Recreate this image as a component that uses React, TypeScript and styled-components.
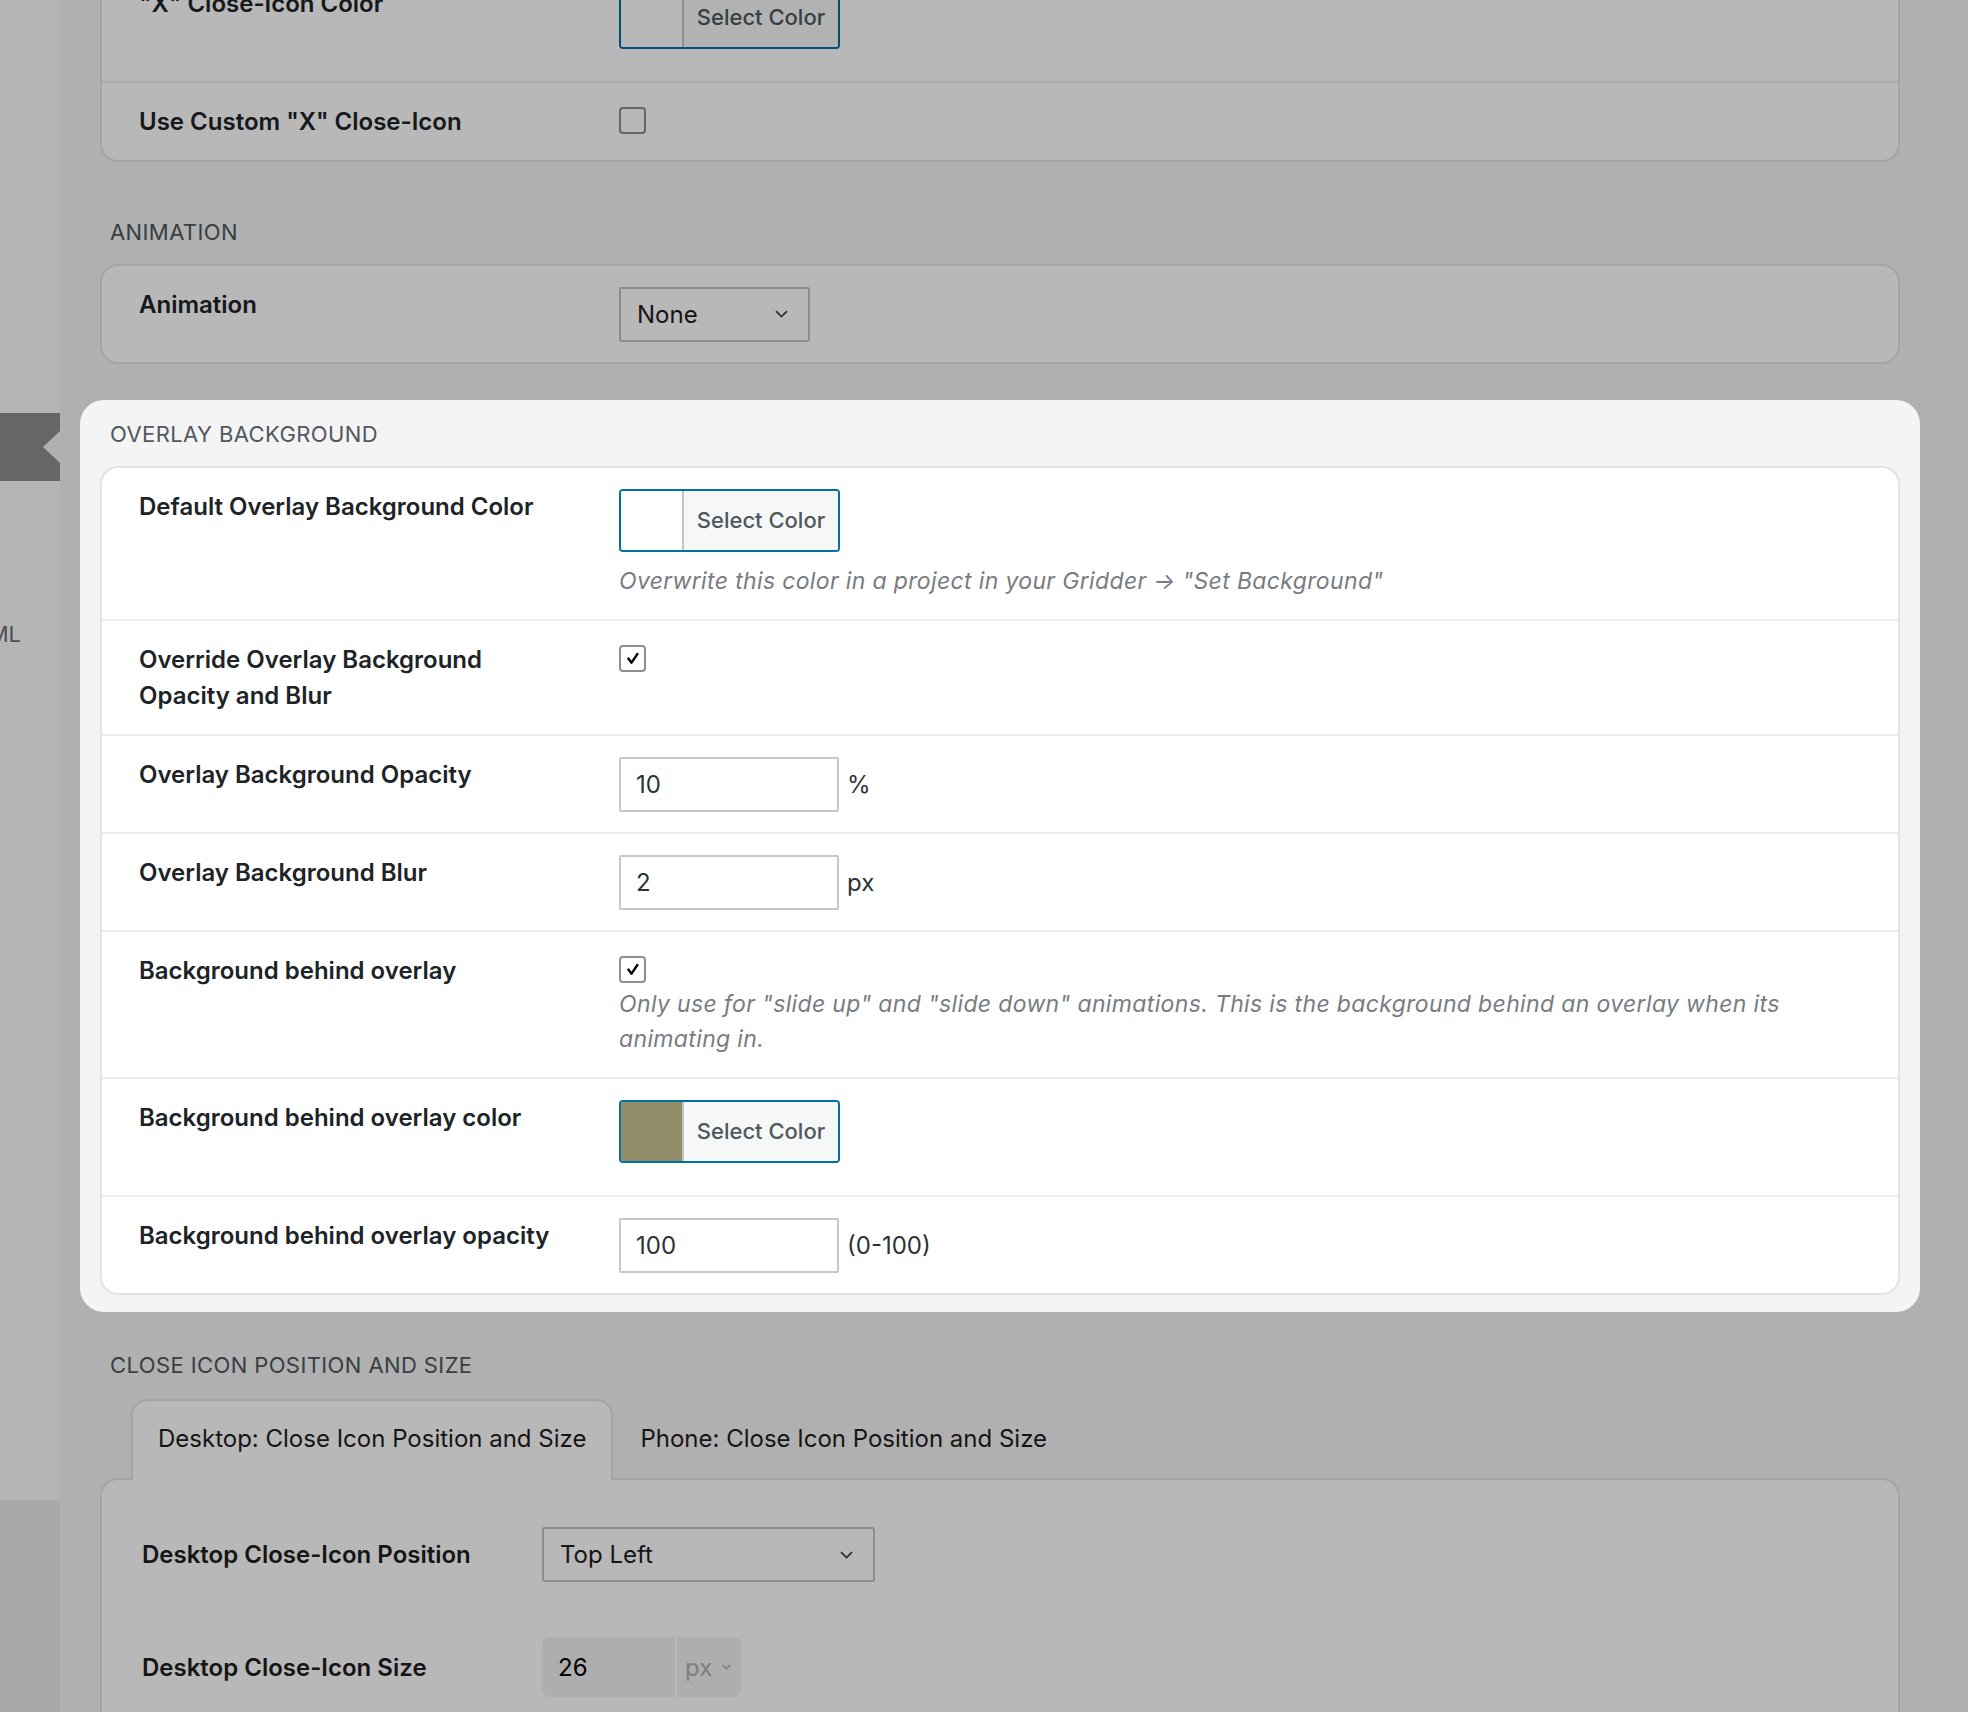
import React from "react";
import styled, { createGlobalStyle } from "styled-components";

const GlobalStyle = createGlobalStyle`
  html, body {
    margin: 0;
    padding: 0;
  }
  body {
    background: #f4f4f4;
    font-family: Inter, "Noto Sans", "Liberation Sans", sans-serif;
    color: #1d2327;
  }
  * {
    box-sizing: border-box;
  }
`;

const CheckMark = () => (
  <svg width="27" height="27" viewBox="0 0 27 27">
    <path
      d="M8.6 13.6 L12.4 18.4 L19.2 8.2"
      fill="none"
      stroke="#000"
      strokeWidth="2.8"
      strokeLinecap="round"
      strokeLinejoin="round"
    />
  </svg>
);

const Chevron = ({ small }: { small?: boolean }) => (
  <svg
    width={small ? 9 : 13}
    height={small ? 6 : 8}
    viewBox="0 0 13 8"
    style={{ flexShrink: 0 }}
  >
    <path
      d="M1 1.2 L6.5 6.6 L12 1.2"
      fill="none"
      stroke="currentColor"
      strokeWidth={small ? 2.2 : 1.7}
    />
  </svg>
);

const ColorPicker = ({ color }: { color: string }) => (
  <ColorButton>
    <Swatch $color={color} />
    <ColorText>Select Color</ColorText>
  </ColorButton>
);

const Checkbox = ({ checked }: { checked?: boolean }) => (
  <CheckLine>
    <CheckBox>{checked && <CheckMark />}</CheckBox>
  </CheckLine>
);

const App = () => {
  return (
    <>
      <GlobalStyle />
      <Page>
        <AdminMenu>
          <MenuTop />
          <MenuCurrent />
          <MenuBody>
            <MenuLabel>HTML</MenuLabel>
          </MenuBody>
          <MenuFoot />
        </AdminMenu>

        <Main>
          <Card $first>
            <Row>
              <Label>"X" Close-Icon Color</Label>
              <Field>
                <ColorPicker color="#ffffff" />
              </Field>
            </Row>
            <Row>
              <Label>Use Custom "X" Close-Icon</Label>
              <Field>
                <Checkbox />
              </Field>
            </Row>
          </Card>

          <Section>
            <SectionTitle>Animation</SectionTitle>
            <Card>
              <Row>
                <Label>Animation</Label>
                <Field>
                  <Select $width={191}>
                    None
                    <Chevron />
                  </Select>
                </Field>
              </Row>
            </Card>
          </Section>

          <Spotlight>
            <SectionTitle>Overlay Background</SectionTitle>
            <Card>
              <Row>
                <Label>Default Overlay Background Color</Label>
                <Field>
                  <ColorPicker color="#ffffff" />
                  <Hint>
                    Overwrite this color in a project in your Gridder → "Set
                    Background"
                  </Hint>
                </Field>
              </Row>
              <Row>
                <Label>Override Overlay Background Opacity and Blur</Label>
                <Field>
                  <Checkbox checked />
                </Field>
              </Row>
              <Row>
                <Label>Overlay Background Opacity</Label>
                <Field>
                  <InputLine>
                    <TextInput>10</TextInput>
                    <Unit>%</Unit>
                  </InputLine>
                </Field>
              </Row>
              <Row>
                <Label>Overlay Background Blur</Label>
                <Field>
                  <InputLine>
                    <TextInput>2</TextInput>
                    <Unit>px</Unit>
                  </InputLine>
                </Field>
              </Row>
              <Row>
                <Label>Background behind overlay</Label>
                <Field>
                  <Checkbox checked />
                  <Hint>
                    Only use for "slide up" and "slide down" animations. This is
                    the background behind an overlay when its animating in.
                  </Hint>
                </Field>
              </Row>
              <Row>
                <Label>Background behind overlay color</Label>
                <Field>
                  <ColorPicker color="#928d69" />
                </Field>
              </Row>
              <Row>
                <Label>Background behind overlay opacity</Label>
                <Field>
                  <InputLine>
                    <TextInput>100</TextInput>
                    <Unit>(0-100)</Unit>
                  </InputLine>
                </Field>
              </Row>
            </Card>
          </Spotlight>

          <Section>
            <SectionTitle $gap={20}>Close Icon Position and Size</SectionTitle>
            <TabList>
              <Tab $active>Desktop: Close Icon Position and Size</Tab>
              <Tab>Phone: Close Icon Position and Size</Tab>
            </TabList>
            <TabPanel>
              <PanelRow>
                <PanelLabel>Desktop Close-Icon Position</PanelLabel>
                <Select $width={333}>
                  Top Left
                  <Chevron />
                </Select>
              </PanelRow>
              <PanelRow>
                <PanelLabel>Desktop Close-Icon Size</PanelLabel>
                <UnitInput>
                  <UnitValue>26</UnitValue>
                  <UnitPicker>
                    px
                    <Chevron small />
                  </UnitPicker>
                </UnitInput>
              </PanelRow>
            </TabPanel>
          </Section>
        </Main>

        <Dimmer />
      </Page>
    </>
  );
};

export default App;

const Page = styled.div`
  display: flex;
  width: 1968px;
  height: 1712px;
  overflow: hidden;
  background: #f4f4f4;
`;

const AdminMenu = styled.div`
  width: 60px;
  flex-shrink: 0;
  display: flex;
  flex-direction: column;
`;

const MenuTop = styled.div`
  height: 413px;
  background: #fbfbfb;
`;

const MenuCurrent = styled.div`
  position: relative;
  height: 68px;
  background: #8e8e8e;

  &::after {
    content: "";
    position: absolute;
    right: 0;
    top: 18px;
    border: 16px solid transparent;
    border-right: 17px solid #f4f4f4;
    border-left-width: 0;
  }
`;

const MenuBody = styled.div`
  height: 1019px;
  background: #fbfbfb;
  display: flex;
  justify-content: flex-end;
  align-items: flex-start;
  padding: 139px 39px 0 0;
  overflow: hidden;
`;

const MenuLabel = styled.span`
  font-size: 22px;
  line-height: 28px;
  color: #6e6e6e;
  white-space: nowrap;
`;

const MenuFoot = styled.div`
  flex: 1;
  background: #ebebeb;
`;

const Main = styled.div`
  flex: 1;
  padding: 0 68px 0 40px;
`;

const Card = styled.div<{ $first?: boolean }>`
  background: #ffffff;
  border: 2px solid #e3e3e3;
  border-radius: 18px;
  margin-top: ${(p) => (p.$first ? "-37px" : "0")};
`;

const Row = styled.div`
  display: grid;
  grid-template-columns: 517px 1fr;
  padding: 20.5px 0;

  & + & {
    border-top: 2px solid #ececec;
  }
`;

const Label = styled.div`
  padding: 0 60px 0 37px;
  font-size: 24px;
  font-weight: 600;
  line-height: 36px;
  color: #1d2327;
`;

const Field = styled.div`
  display: flex;
  flex-direction: column;
  align-items: flex-start;
  padding-right: 60px;
`;

const ColorButton = styled.div`
  display: flex;
  height: 63px;
  border: 2px solid #0071a1;
  border-radius: 4px;
  overflow: hidden;
  margin-bottom: 12px;
`;

const Swatch = styled.div<{ $color: string }>`
  width: 61px;
  background: ${(p) => p.$color};
`;

const ColorText = styled.div`
  width: 156px;
  display: flex;
  align-items: center;
  justify-content: center;
  border-left: 2px solid #c3c4c7;
  background: #f6f7f7;
  font-size: 22px;
  font-weight: 500;
  color: #50575e;
`;

const Hint = styled.p`
  margin: 0;
  font-size: 23px;
  letter-spacing: 0.35px;
  line-height: 35px;
  font-style: italic;
  color: #787c82;
`;

const CheckLine = styled.div`
  height: 34px;
  display: flex;
  align-items: center;
`;

const CheckBox = styled.div`
  width: 27px;
  height: 27px;
  border: 2px solid #8c8f94;
  border-radius: 4px;
  background: #ffffff;
  display: flex;
  align-items: center;
  justify-content: center;
`;

const InputLine = styled.div`
  display: flex;
  align-items: center;
  gap: 8px;
`;

const TextInput = styled.div`
  width: 220px;
  height: 55px;
  border: 2px solid #c8c8c8;
  border-radius: 2px;
  background: #ffffff;
  padding: 0 15px;
  display: flex;
  align-items: center;
  font-size: 24px;
  color: #2c3338;
`;

const Unit = styled.span`
  font-size: 24px;
  color: #2c3338;
`;

const Select = styled.div<{ $width: number }>`
  width: ${(p) => p.$width}px;
  height: 55px;
  border: 2px solid #c4c4c4;
  border-radius: 2px;
  background: #ffffff;
  padding: 0 20px 0 16px;
  display: flex;
  align-items: center;
  justify-content: space-between;
  font-size: 24px;
  color: #1e1e1e;

  svg {
    color: #3c434a;
  }
`;

const Section = styled.div`
  margin-top: 56px;
`;

const Spotlight = styled.div`
  position: relative;
  z-index: 11;
  margin: 36px -20px -17px;
  padding: 20px 20px 17px;
  background: #f4f4f4;
  border-radius: 24px;
`;

const SectionTitle = styled.h2<{ $gap?: number }>`
  margin: 0 0 ${(p) => p.$gap ?? 18}px;
  padding-left: 10px;
  font-size: 22px;
  font-weight: 400;
  line-height: 28px;
  letter-spacing: 0.4px;
  text-transform: uppercase;
  color: #50575e;
`;

const TabList = styled.div`
  display: flex;
  padding-left: 31px;
`;

const Tab = styled.div<{ $active?: boolean }>`
  position: relative;
  z-index: 1;
  height: 81px;
  margin-bottom: -2px;
  padding: 0 25px 4px;
  display: flex;
  align-items: center;
  border: 2px solid ${(p) => (p.$active ? "#e3e3e3" : "transparent")};
  border-bottom: none;
  border-radius: 16px 16px 0 0;
  background: ${(p) => (p.$active ? "#ffffff" : "transparent")};
  font-size: 24px;
  color: #1e1e1e;
  white-space: nowrap;
`;

const TabPanel = styled.div`
  background: #ffffff;
  border: 2px solid #e3e3e3;
  border-radius: 18px;
  padding: 47px 0 80px 40px;
  display: flex;
  flex-direction: column;
  gap: 55px;
`;

const PanelRow = styled.div`
  display: flex;
  align-items: center;
`;

const PanelLabel = styled.div`
  width: 400px;
  font-size: 24px;
  font-weight: 600;
  color: #1e1e1e;
`;

const UnitInput = styled.div`
  display: flex;
  width: 199px;
  height: 60px;
  border-radius: 8px;
  background: #f1f1f1;
  overflow: hidden;
`;

const UnitValue = styled.div`
  width: 133px;
  padding-left: 16px;
  display: flex;
  align-items: center;
  font-size: 24px;
  color: #000000;
`;

const UnitPicker = styled.div`
  flex: 1;
  border-left: 2px solid #ffffff;
  padding-left: 8px;
  display: flex;
  align-items: center;
  gap: 10px;
  font-size: 24px;
  color: #b0b0b0;
`;

const Dimmer = styled.div`
  position: fixed;
  inset: 0;
  z-index: 10;
  background: rgba(0, 0, 0, 0.28);
`;
